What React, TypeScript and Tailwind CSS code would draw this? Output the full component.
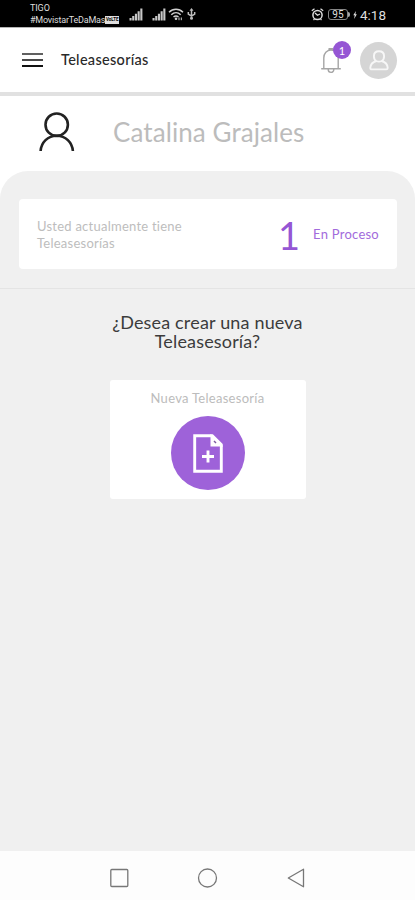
const navColor = "#777777";

export default function App() {
  return (
    <div className="flex h-[900px] w-[415px] flex-col overflow-hidden bg-white font-['Lato',sans-serif]">
      <StatusBar />
      <Header />
      <UserRow name="Catalina Grajales" />

      <main className="flex flex-1 flex-col rounded-t-[28px] bg-[#f0f0f0]">
        <SummaryCard count={1} />
        <div className="mt-[19px] h-px bg-[#e4e4e4]" />
        <h2 className="mt-[24px] text-center text-[18px] leading-[19px] tracking-[0.17px] text-[#3c3c3c]">
          ¿Desea crear una nueva
          <br />
          Teleasesoría?
        </h2>
        <NewRequestCard />
      </main>

      <NavigationBar />
    </div>
  );
}

function StatusBar() {
  return (
    <div className="flex h-7 shrink-0 border-b border-[#b5b5b5] bg-black pl-[30px] pr-[29px] text-[#dedede]">
      <div className="w-[90px] pt-[2px] font-['Roboto',sans-serif] text-[9px] leading-[12px]">
        <p className="tracking-[-0.1px]">TIGO</p>
        <div className="flex items-center">
          <p className="whitespace-nowrap tracking-[-0.2px]">
            #MovistarTeDaMas
          </p>
          <span className="flex h-[8px] w-[14px] items-center justify-center bg-[#dedede] text-[4.5px] font-bold leading-none text-black">
            VoLTE
          </span>
        </div>
      </div>

      <div className="flex pl-[9px] pt-[8px]">
        <SignalIcon />
        <SignalIcon className="ml-[9px]" />
        <svg className="ml-[2px] h-[13px] w-[16px]" viewBox="0 0 16 13" fill="none">
          <path
            d="M1 4.3C5 .2 11 .2 15 4.3M3.3 6.7c2.8-2.7 6.6-2.7 9.4 0M5.5 9c1.5-1.3 3.5-1.3 5 0"
            stroke="#cfcfcf"
            strokeWidth="1.5"
          />
          <circle cx="8" cy="10.8" r="1.3" fill="#cfcfcf" />
          <path d="M11 9.5v2.7M13.3 9.5v2.7" stroke="#cfcfcf" />
        </svg>
        <svg className="ml-[3px] h-[12px] w-[9px]" viewBox="0 0 9 12" fill="none">
          <path
            d="M4.5 1.5v9M1.3 4v2l3.2 2.2L7.7 6V4"
            stroke="#bdbdbd"
            strokeWidth="1.5"
          />
          <path d="M4.5 0l2 2.7h-4z" fill="#bdbdbd" />
          <circle cx="4.5" cy="10.2" r="1.5" fill="#bdbdbd" />
        </svg>
      </div>

      <div className="ml-auto flex pt-[8px]">
        <svg className="h-[13px] w-[13px]" viewBox="0 0 13 13" fill="none" stroke="#dedede">
          <circle cx="6.5" cy="7" r="4.6" strokeWidth="1.5" />
          <path
            d="M.8 2.8 3.5.8M12.2 2.8 9.5.8M2.5 12l1-1M10.5 12l-1-1M4 5l2.5 2.3L9 6"
            strokeWidth="1.2"
          />
        </svg>
        <div className="ml-[4px] mt-px flex h-[11px] w-[20px] items-center justify-center rounded-[3px] border border-[#858585] pt-px font-['Roboto',sans-serif] text-[10px] leading-none">
          95
        </div>
        <span className="mt-[4px] h-[5px] w-[2px] rounded-r bg-[#a5a5a5]" />
        <svg className="ml-[3px] mt-[2px] h-[10px] w-[4px]" viewBox="0 0 5 10">
          <path d="M3.7 0 .3 5.4h1.8L1.4 10 4.8 4H3z" fill="#dedede" />
        </svg>
        <span className="ml-[3px] font-['Roboto',sans-serif] text-[13.5px] leading-[14px]">
          4:18
        </span>
      </div>
    </div>
  );
}

function SignalIcon({ className = "" }: { className?: string }) {
  return (
    <svg className={`h-[13px] w-[14px] ${className}`} viewBox="0 0 14 13">
      <path
        d="M.5 10h2.1v2.5H.5zM3.2 8h2.1v4.5H3.2zM5.9 5.7H8v6.8H5.9zM8.6 3.2h2.1v9.3H8.6zM11.3.5h2.1v12h-2.1z"
        fill="#c7c7c7"
      />
    </svg>
  );
}

function Header() {
  return (
    <header className="flex h-[68px] shrink-0 items-center border-b-4 border-[#e1e1e1] pl-[22px] pr-[18px]">
      <button aria-label="Menú" className="flex w-[21px] flex-col gap-[4px]">
        <span className="h-[2px] bg-[#606060]" />
        <span className="h-[2px] bg-[#484848]" />
        <span className="h-[2px] bg-[#111111]" />
      </button>
      <h1 className="ml-[18px] text-[14.5px] font-medium leading-5 tracking-[0.3px] text-[#292929]">
        Teleasesorías
      </h1>

      <div className="relative ml-auto h-[38px] w-[31px]">
        <svg
          className="mt-[6px] h-[28px] w-[22px]"
          viewBox="0 0 22 28"
          fill="none"
          stroke="#a5a5a5"
          strokeWidth="1.4"
        >
          <path d="M3.8 21.2V11c0-4.6 3-8 7.2-8s7.2 3.4 7.2 8v10.2M1.2 21.8h19.6M9.2 3V1.7h3.6V3M8.2 22.5c0 3.8 5.6 3.8 5.6 0" />
        </svg>
        <span className="absolute right-0 top-0 flex h-[18px] w-[18px] items-center justify-center rounded-full bg-[#9556d4] text-[11px] leading-none text-white">
          1
        </span>
      </div>

      <div className="ml-[9px] flex h-[37px] w-[37px] items-center justify-center rounded-full bg-[#d5d5d5]">
        <svg
          className="h-[21px] w-[20px]"
          viewBox="0 0 20 21"
          fill="none"
          stroke="#f7f7f7"
          strokeWidth="1.9"
          strokeLinejoin="round"
        >
          <path d="M7.3 11C5.6 10 4.9 8.2 4.9 6.2 4.9 3.2 7 1.3 10 1.3s5.1 1.9 5.1 4.9c0 2-.7 3.8-2.4 4.8 3.5 1 5.8 3.2 6 6.9 0 1-.5 1.5-1.5 1.5H2.8c-1 0-1.5-.5-1.5-1.5.2-3.7 2.5-5.9 6-6.9 1.7.8 3.7.8 5.4 0" />
        </svg>
      </div>
    </header>
  );
}

function UserRow({ name }: { name: string }) {
  return (
    <section className="flex h-[75px] shrink-0 items-center pb-[3px] pl-[38px]">
      <svg
        className="h-[40px] w-[38px]"
        viewBox="0 0 38 40"
        fill="none"
        stroke="#222222"
        strokeWidth="2.6"
      >
        <circle cx="18.7" cy="12.7" r="11.2" />
        <path d="M2.6 39c.6-8.7 7.2-15.2 16.1-15.2S34.2 30.3 34.9 39" />
      </svg>
      <p className="ml-[37px] text-[26px] leading-8 tracking-[0.08px] text-[#bcbcbc]">
        {name}
      </p>
    </section>
  );
}

function SummaryCard({ count }: { count: number }) {
  return (
    <section className="ml-[19px] mr-[18px] mt-7 flex h-[70px] items-center rounded-[4px] bg-white px-[18px] pt-[2px]">
      <p className="text-[13px] leading-[17px] tracking-[0.24px] text-[#bdbdbd]">
        Usted actualmente tiene
        <br />
        Teleasesorías
      </p>
      <span className="mb-px ml-auto text-[38px] leading-none text-[#9556d4]">
        {count}
      </span>
      <span className="ml-[13px] text-[13px] tracking-[0.25px] text-[#a26bdc]">
        En Proceso
      </span>
    </section>
  );
}

function NewRequestCard() {
  return (
    <button className="mx-auto mt-[29px] flex h-[119px] w-[196px] flex-col items-center rounded-[3px] bg-white pt-[10px]">
      <span className="text-[13px] leading-[17px] tracking-[0.28px] text-[#bcbcbc]">
        Nueva Teleasesoría
      </span>
      <span className="mt-[9px] flex h-[74px] w-[74px] items-center justify-center rounded-full bg-[#9e62d9]">
        <svg className="h-[39px] w-[30px]" viewBox="0 0 30 39" fill="none" stroke="white">
          <path d="M1.7 1.7h17.6l9 9v26.6H1.7z" strokeWidth="2.9" />
          <path d="M18.5 2v9.5H28z" strokeWidth="2" fill="white" />
          <path d="m21 7 2 2" stroke="#7d5aa0" strokeWidth="1.4" />
          <path d="M15 16.5v12M9 22.5h12" strokeWidth="2.9" />
        </svg>
      </span>
    </button>
  );
}

function NavigationBar() {
  return (
    <nav className="flex h-[49px] shrink-0 items-center bg-[#fdfdfd] px-[109px] pt-[5px]">
      <svg className="h-5 w-full" viewBox="0 0 197 20" fill="none" stroke={navColor} strokeWidth="1.3">
        <rect x="1.8" y="1.5" width="17" height="17" rx="1" />
        <circle cx="98.5" cy="10" r="9" />
        <path d="M194.5 1.2v17.6L179.3 10z" strokeLinejoin="round" />
      </svg>
    </nav>
  );
}
